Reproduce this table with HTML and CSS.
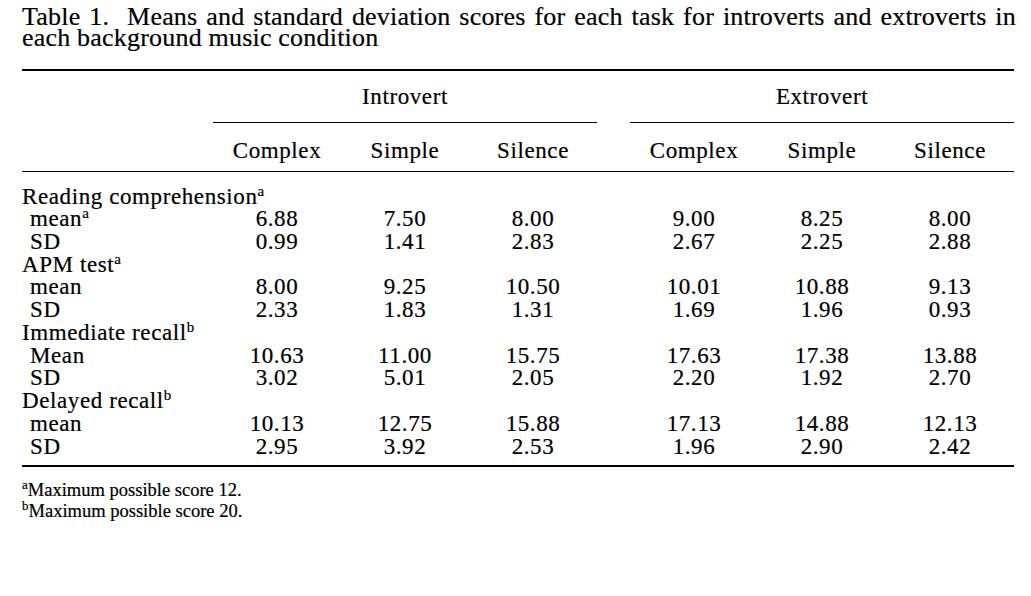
FILE: index.html
```html
<!DOCTYPE html>
<html lang="en">
<head>
<meta charset="utf-8">
<title>Table 1</title>
<link rel="stylesheet" href="styles.css">
</head>
<body>
<div class="page">
  <div class="caption">
    <div class="cap-line1"><span class="cap-label">Table 1.</span> Means and standard deviation scores for each task for introverts and extroverts in</div>
    <div class="cap-line2">each background music condition</div>
  </div>
  <table class="data">
    <colgroup>
      <col class="c-stub">
      <col class="c-num"><col class="c-num"><col class="c-num">
      <col class="c-gap">
      <col class="c-num"><col class="c-num"><col class="c-num">
    </colgroup>
    <thead>
      <tr class="group-row">
        <th></th>
        <th colspan="3" class="group">Introvert</th>
        <th></th>
        <th colspan="3" class="group">Extrovert</th>
      </tr>
      <tr class="head-row">
        <th></th>
        <th>Complex</th><th>Simple</th><th>Silence</th>
        <th></th>
        <th>Complex</th><th>Simple</th><th>Silence</th>
      </tr>
    </thead>
    <tbody>
      <tr class="first"><td class="stub">Reading comprehension<sup>a</sup></td><td></td><td></td><td></td><td></td><td></td><td></td><td></td></tr>
      <tr><td class="stub sub">mean<sup>a</sup></td><td>6.88</td><td>7.50</td><td>8.00</td><td></td><td>9.00</td><td>8.25</td><td>8.00</td></tr>
      <tr><td class="stub sub">SD</td><td>0.99</td><td>1.41</td><td>2.83</td><td></td><td>2.67</td><td>2.25</td><td>2.88</td></tr>
      <tr><td class="stub">APM test<sup>a</sup></td><td></td><td></td><td></td><td></td><td></td><td></td><td></td></tr>
      <tr><td class="stub sub">mean</td><td>8.00</td><td>9.25</td><td>10.50</td><td></td><td>10.01</td><td>10.88</td><td>9.13</td></tr>
      <tr><td class="stub sub">SD</td><td>2.33</td><td>1.83</td><td>1.31</td><td></td><td>1.69</td><td>1.96</td><td>0.93</td></tr>
      <tr><td class="stub">Immediate recall<sup>b</sup></td><td></td><td></td><td></td><td></td><td></td><td></td><td></td></tr>
      <tr><td class="stub sub">Mean</td><td>10.63</td><td>11.00</td><td>15.75</td><td></td><td>17.63</td><td>17.38</td><td>13.88</td></tr>
      <tr><td class="stub sub">SD</td><td>3.02</td><td>5.01</td><td>2.05</td><td></td><td>2.20</td><td>1.92</td><td>2.70</td></tr>
      <tr><td class="stub">Delayed recall<sup>b</sup></td><td></td><td></td><td></td><td></td><td></td><td></td><td></td></tr>
      <tr><td class="stub sub">mean</td><td>10.13</td><td>12.75</td><td>15.88</td><td></td><td>17.13</td><td>14.88</td><td>12.13</td></tr>
      <tr class="last"><td class="stub sub">SD</td><td>2.95</td><td>3.92</td><td>2.53</td><td></td><td>1.96</td><td>2.90</td><td>2.42</td></tr>
    </tbody>
  </table>
  <div class="notes">
    <div class="note"><sup>a</sup>Maximum possible score 12.</div>
    <div class="note"><sup>b</sup>Maximum possible score 20.</div>
  </div>
</div>
</body>
</html>
```

FILE: styles.css
```css
html, body {
  margin: 0;
  padding: 0;
  background: #ffffff;
}

body {
  font-family: "Liberation Serif", "Times New Roman", serif;
  color: #000000;
  -webkit-text-stroke: 0.2px #000000;
}

.page {
  padding: 6px 0 0 22px;
  width: 994px;
}

.caption {
  font-size: 26px;
  line-height: 21px;
  letter-spacing: 0.2px;
}

.cap-line1 {
  text-align: justify;
  text-align-last: justify;
}

.cap-label {
  margin-right: 9px;
}

.data {
  margin-top: 21px;
  width: 992px;
  table-layout: fixed;
  border-collapse: collapse;
  border-top: 2px solid #000000;
  border-bottom: 2px solid #000000;
  font-size: 23px;
  letter-spacing: 0.6px;
}

.c-stub { width: 191px; }
.c-num { width: 128px; }
.c-gap { width: 33px; }

.data th {
  font-weight: normal;
  text-align: center;
  padding: 0;
  line-height: 24px;
}

.group-row th {
  padding: 13.5px 0 13.5px;
}

.group-row th.group {
  border-bottom: 1px solid #000000;
}

.head-row th {
  padding: 15.5px 0 8.5px;
  border-bottom: 1px solid #000000;
}

.data td {
  padding: 0;
  line-height: 22.73px;
  text-align: center;
  white-space: nowrap;
}

.data td.stub {
  text-align: left;
}

.data td.sub {
  padding-left: 8px;
}

.data tr.first td {
  padding-top: 13.5px;
}

.data tr.last td {
  padding-bottom: 6.2px;
}

sup {
  font-size: 15px;
  line-height: 0;
  vertical-align: 8px;
  letter-spacing: 0;
}

.notes {
  margin-top: 13px;
  font-size: 18.5px;
  line-height: 21px;
}

.notes sup {
  font-size: 13px;
  vertical-align: 7px;
}
```
